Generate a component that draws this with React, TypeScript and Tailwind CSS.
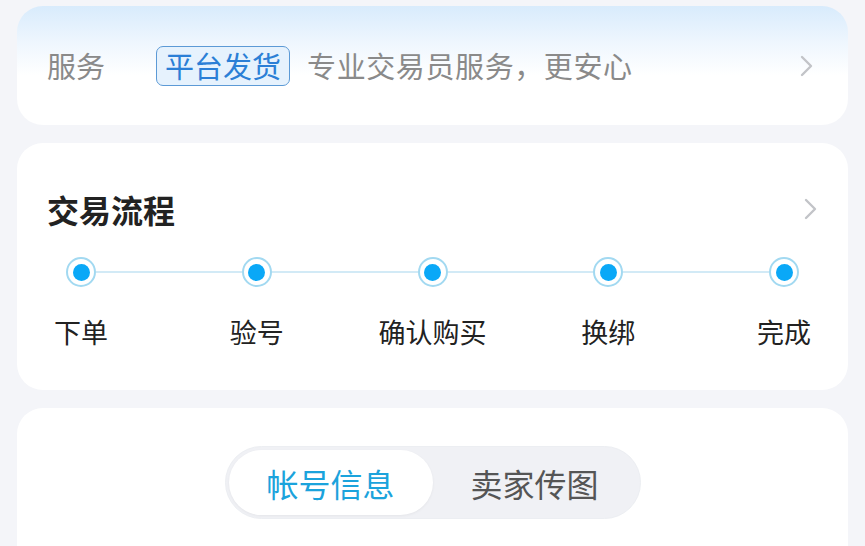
import React from 'react';

const steps = ['下单', '验号', '确认购买', '换绑', '完成'];

const Chevron: React.FC = () => (
  <svg width="16" height="24" viewBox="0 0 16 24" fill="none">
    <polyline points="4,3 13,12 4,21" stroke="#c2c4c8" strokeWidth="2.4" strokeLinecap="round" strokeLinejoin="round" />
  </svg>
);

const App: React.FC = () => {
  return (
    <div
      className="w-[865px] h-[546px] overflow-hidden bg-[#f4f5f9] px-[17px] pt-[6px] flex flex-col gap-[18px]"
      style={{ fontFamily: '"Noto Sans CJK SC", "Noto Sans", sans-serif' }}
    >
      {/* service */}
      <div className="h-[119px] shrink-0 rounded-[26px] bg-[linear-gradient(180deg,#d8ebfc_0%,#eef6fe_30%,#ffffff_58%)] flex items-center pl-[30px] pr-[34px]">
        <span className="text-[29px] leading-none text-[#8a8a8a]">服务</span>
        <span className="ml-[51px] h-[40px] px-[8px] flex items-center rounded-[7px] border-[1.5px] border-[#5c9ad6] bg-[#e6f2fd] text-[29px] leading-none text-[#2b7fd6]">
          平台发货
        </span>
        <span className="ml-[17px] text-[29px] leading-none tracking-[0.6px] text-[#8a8a8a]">专业交易员服务，更安心</span>
        <div className="ml-auto">
          <Chevron />
        </div>
      </div>

      {/* flow */}
      <div className="h-[247px] shrink-0 rounded-[26px] bg-white px-[30px] pt-[50px]">
        <div className="flex items-center justify-between">
          <span className="text-[32px] leading-none font-bold text-[#222]">交易流程</span>
          <Chevron />
        </div>
        <div className="mt-[32px] flex items-start">
          {steps.map((s, i) => (
            <React.Fragment key={s}>
              {i > 0 && <div className="flex-1 h-[2px] mt-[14px] -mx-[19px] bg-[#d2eaf6]" />}
              <div className="relative z-10 w-[68px] flex flex-col items-center">
                <div className="w-[30px] h-[30px] rounded-full border-2 border-[#a2d9f1] bg-white flex items-center justify-center">
                  <div className="w-[17px] h-[17px] rounded-full bg-[#0aa8f7]" />
                </div>
                <span className="mt-[31px] text-[27px] leading-none text-[#222] whitespace-nowrap">{s}</span>
              </div>
            </React.Fragment>
          ))}
        </div>
      </div>

      {/* tabs */}
      <div className="h-[200px] shrink-0 rounded-[26px] bg-white pt-[38px] flex justify-center">
        <div className="h-[73px] w-[416px] rounded-full bg-[#f0f1f5] border border-[#eceef2] p-[3px] flex">
          <div className="w-[204px] h-full rounded-full bg-white shadow-[0_1px_3px_rgba(0,0,0,0.05)] flex items-center justify-center text-[32px] leading-none text-[#1ba3dc]">
            帐号信息
          </div>
          <div className="w-[204px] h-full flex items-center justify-center text-[32px] leading-none text-[#555]">
            卖家传图
          </div>
        </div>
      </div>
    </div>
  );
};

export default App;
